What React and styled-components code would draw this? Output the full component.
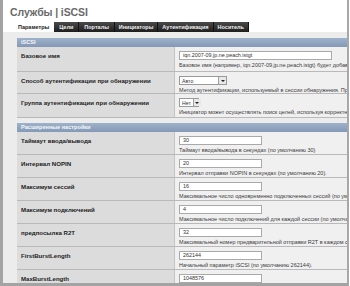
import React from "react";
import styled, { createGlobalStyle } from "styled-components";

const Global = createGlobalStyle`
  html, body {
    margin: 0;
    padding: 0;
    overflow: hidden;
    background: #ffffff;
  }
  body {
    font-family: "Liberation Sans", Arial, sans-serif;
  }
`;

const Frame = styled.div`
  width: 344px;
  height: 283px;
  border-left: 3px solid #a3a3a3;
  border-right: 2px solid #a8a8a8;
  border-bottom: 3px solid #a3a3a3;
  background: #ffffff;
  display: flex;
  flex-direction: column;
`;

const Title = styled.div`
  font-size: 10.5px;
  font-weight: bold;
  color: #6a6a6a;
  padding: 6px 0 0 7px;
  height: 16px;
  box-sizing: border-box;
  letter-spacing: -0.1px;
`;

const Tabs = styled.div`
  display: flex;
  margin: 6px 0 0 10px;
  height: 10px;
`;

const Tab = styled.div`
  font-size: 5.5px;
  font-weight: bold;
  line-height: 10px;
  padding: 0 ${(p) => p.pad || 4}px;
  color: ${(p) => (p.active ? "#222" : "#f0f0f0")};
  background: ${(p) =>
    p.active ? "#ffffff" : "linear-gradient(#4a4a4a, #1e1e1e)"};
  border-right: ${(p) => (p.active ? "none" : "1px solid #111")};
  white-space: nowrap;
`;

const Panel = styled.div`
  flex: 1;
  background: #ececec;
  padding: 6px 0 0 14px;
  overflow: hidden;
`;

const Section = styled.div`
  width: 340px;
  margin-bottom: 5px;
`;

const Header = styled.div`
  height: 9px;
  line-height: 9px;
  font-size: 5.6px;
  font-weight: bold;
  color: #f4f6fa;
  padding-left: 4px;
  background: linear-gradient(#9fb2cb, #8499b6);
`;

const Row = styled.div`
  display: grid;
  grid-template-columns: 158px 1fr;
  height: ${(p) => p.h || 23}px;
  border-bottom: 1px solid #b9b9b9;
  box-sizing: border-box;
`;

const Label = styled.div`
  background: #dcdcdc;
  font-size: 6.1px;
  font-weight: bold;
  color: #222;
  padding: 5px 0 0 4px;
  border-right: 1px solid #c4c4c4;
  white-space: nowrap;
`;

const Value = styled.div`
  background: #f0f0f0;
  padding: 4px 0 0 4px;
  display: flex;
  flex-direction: column;
  align-items: flex-start;
  gap: 2px;
  overflow: hidden;
`;

const Input = styled.div`
  width: ${(p) => p.w}px;
  height: 9px;
  box-sizing: border-box;
  background: #ffffff;
  border: 1px solid #a9a9a9;
  font-size: 5.4px;
  line-height: 7px;
  padding-left: 3px;
  color: #333;
`;

const Select = styled.div`
  width: ${(p) => p.w}px;
  height: 9px;
  box-sizing: border-box;
  background: #ffffff;
  border: 1px solid #9a9a9a;
  display: flex;
  align-items: center;
  justify-content: space-between;
  gap: 2px;
  font-size: 5.2px;
  color: #333;
  padding-left: 2px;
  white-space: nowrap;
`;

const Arrow = styled.div`
  flex: none;
  width: 7px;
  height: 7px;
  background: #e8e8e8;
  border-left: 1px solid #a0a0a0;
  display: flex;
  align-items: center;
  justify-content: center;
  &::after {
    content: "";
    border-left: 2px solid transparent;
    border-right: 2px solid transparent;
    border-top: 2px solid #222;
  }
`;

const Desc = styled.div`
  font-size: 5.5px;
  color: #3a3a3a;
  white-space: nowrap;
  line-height: 7px;
`;

const advanced = [
  ["Таймаут ввода/вывода", "30", "Таймаут ввода/вывода в секундах (по умолчанию 30)"],
  ["Интервал NOPIN", "20", "Интервал отправки NOPIN в секундах (по умолчанию 20)."],
  ["Максимум сессий", "16", "Максимальное число одновременно подключенных сессий (по умолчан"],
  ["Максимум подключений", "4", "Максимальное число подключений для каждой сессии (по умолчанию"],
  ["предпосылка R2T", "32", "Максимальный номер предварительной отправки R2T в каждом соеди"],
  ["FirstBurstLength", "262144", "Начальный параметр iSCSI (по умолчанию 262144)."],
  ["MaxBurstLength", "1048576", "Максимальный параметр iSCSI (по умолчанию 1048576)."],
];

export default function App() {
  return (
    <>
      <Global />
      <Frame>
        <Title>Службы | iSCSI</Title>
        <Tabs>
          <Tab active pad={5}>Параметры</Tab>
          <Tab pad={5}>Цели</Tab>
          <Tab pad={5}>Порталы</Tab>
          <Tab pad={4}>Инициаторы</Tab>
          <Tab pad={4}>Аутентификация</Tab>
          <Tab pad={4}>Носитель</Tab>
        </Tabs>
        <Panel>
          <Section>
            <Header>iSCSI</Header>
            <Row h={25}>
              <Label>Базовое имя</Label>
              <Value>
                <Input w={153}>iqn.2007-09.jp.ne.peach.istgt</Input>
                <Desc>Базовое имя (например, iqn.2007-09.jp.ne.peach.istgt) будет добавлен</Desc>
              </Value>
            </Row>
            <Row h={22}>
              <Label>Способ аутентификации при обнаружении</Label>
              <Value>
                <Select w={48}>
                  Авто
                  <Arrow />
                </Select>
                <Desc>Метод аутентификации, используемый в сессии обнаружения. При вх</Desc>
              </Value>
            </Row>
            <Row h={24}>
              <Label>Группа аутентификации при обнаружении</Label>
              <Value>
                <Select w={20}>
                  Нет
                  <Arrow />
                </Select>
                <Desc>Инициатор может осуществлять поиск целей, используя корректные</Desc>
              </Value>
            </Row>
          </Section>
          <Section>
            <Header>Расширенные настройки</Header>
            {advanced.map(([label, value, desc]) => (
              <Row key={label}>
                <Label>{label}</Label>
                <Value>
                  <Input w={83}>{value}</Input>
                  <Desc>{desc}</Desc>
                </Value>
              </Row>
            ))}
          </Section>
        </Panel>
      </Frame>
    </>
  );
}
